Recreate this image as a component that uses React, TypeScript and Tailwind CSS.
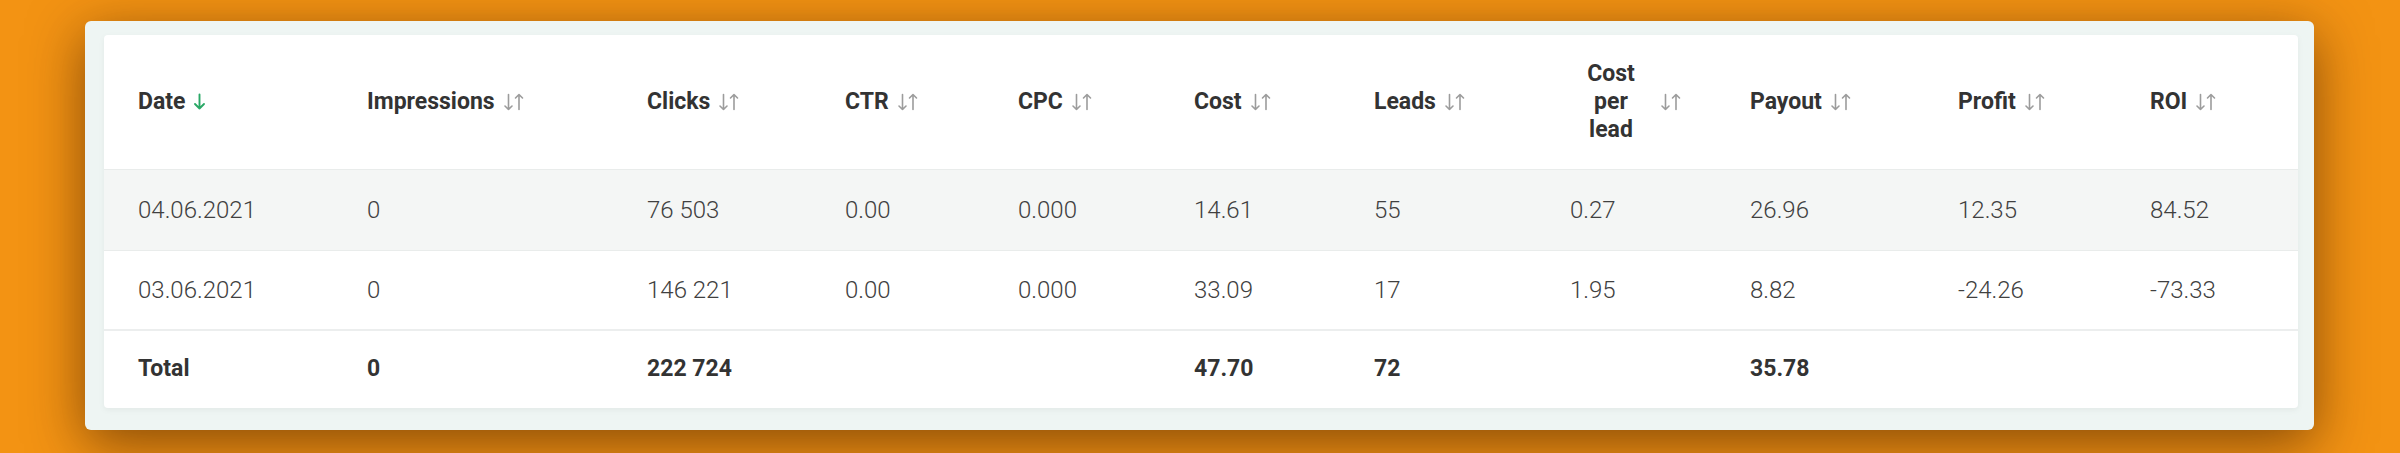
import React from 'react';

type Col = {
  key: string;
  label: string;
  width: string;
  wrap?: boolean;
};

const columns: Col[] = [
  { key: 'date', label: 'Date', width: 'w-[263px]' },
  { key: 'impressions', label: 'Impressions', width: 'w-[280px]' },
  { key: 'clicks', label: 'Clicks', width: 'w-[198px]' },
  { key: 'ctr', label: 'CTR', width: 'w-[173px]' },
  { key: 'cpc', label: 'CPC', width: 'w-[176px]' },
  { key: 'cost', label: 'Cost', width: 'w-[180px]' },
  { key: 'leads', label: 'Leads', width: 'w-[196px]' },
  { key: 'cpl', label: 'Cost per lead', width: 'w-[180px]', wrap: true },
  { key: 'payout', label: 'Payout', width: 'w-[208px]' },
  { key: 'profit', label: 'Profit', width: 'w-[192px]' },
  { key: 'roi', label: 'ROI', width: 'w-[148px]' },
];

const rows: string[][] = [
  ['04.06.2021', '0', '76 503', '0.00', '0.000', '14.61', '55', '0.27', '26.96', '12.35', '84.52'],
  ['03.06.2021', '0', '146 221', '0.00', '0.000', '33.09', '17', '1.95', '8.82', '-24.26', '-73.33'],
];

const total = ['Total', '0', '222 724', '', '', '47.70', '72', '', '35.78', '', ''];

function SortIcon() {
  return (
    <svg width="22" height="18" viewBox="0 0 22 18" fill="none" stroke="#9c9c9c" strokeWidth="1.6" strokeLinecap="round" strokeLinejoin="round">
      <path d="M5.5 1.5v15M2 13l3.5 3.5L9 13" />
      <path d="M16 16.5v-15M12.5 5L16 1.5 19.5 5" />
    </svg>
  );
}

function SortedDown() {
  return (
    <svg width="13" height="17" viewBox="0 0 13 17" fill="none" stroke="#2aa866" strokeWidth="1.9" strokeLinecap="round" strokeLinejoin="round">
      <path d="M6.5 1.5v14M2 11l4.5 4.5L11 11" />
    </svg>
  );
}

export default function App() {
  return (
    <div
      className="w-full h-[453px] bg-[#f39313] pt-[21px] pl-[85px] overflow-hidden"
      style={{ fontFamily: 'Roboto, "Noto Sans", sans-serif' }}
    >
      <div className="w-[2229px] h-[409px] rounded-[6px] bg-[#eef5f3] pt-[14px] pl-[19px] pr-[16px] pb-[22px] shadow-[0_14px_55px_rgba(60,25,0,0.6)]">
        <div className="h-full bg-white rounded-[4px] overflow-hidden shadow-[0_2px_6px_rgba(0,0,0,0.05)]">
          <table className="table-fixed border-collapse w-[2194px]">
            <thead>
              <tr className="h-[134px]">
                {columns.map((c, i) => (
                  <th
                    key={c.key}
                    className={`${c.width} ${i === 0 ? 'pl-[34px]' : ''} p-0 text-left align-middle font-bold text-[23px] text-[#333]`}
                  >
                    <div className="flex items-center gap-[8px]">
                      {c.wrap ? (
                        <span className="w-[82px] text-center leading-[28px]">{c.label}</span>
                      ) : (
                        <span>{c.label}</span>
                      )}
                      {i === 0 ? <SortedDown /> : <SortIcon />}
                    </div>
                  </th>
                ))}
              </tr>
            </thead>
            <tbody>
              {rows.map((r, ri) => (
                <tr
                  key={ri}
                  className={`${ri === 0 ? 'h-[81px] bg-[#f4f6f5]' : 'h-[80px]'} border-t border-[#e9eceb]`}
                >
                  {r.map((v, i) => (
                    <td
                      key={i}
                      className={`${i === 0 ? 'pl-[34px]' : ''} p-0 align-middle font-light text-[24px] text-[#404040]`}
                    >
                      {v}
                    </td>
                  ))}
                </tr>
              ))}
              <tr className="h-[78px] border-t-2 border-[#eceeee]">
                {total.map((v, i) => (
                  <td
                    key={i}
                    className={`${i === 0 ? 'pl-[34px]' : ''} p-0 align-middle font-bold text-[23px] text-[#333]`}
                  >
                    {v}
                  </td>
                ))}
              </tr>
            </tbody>
          </table>
        </div>
      </div>
    </div>
  );
}
